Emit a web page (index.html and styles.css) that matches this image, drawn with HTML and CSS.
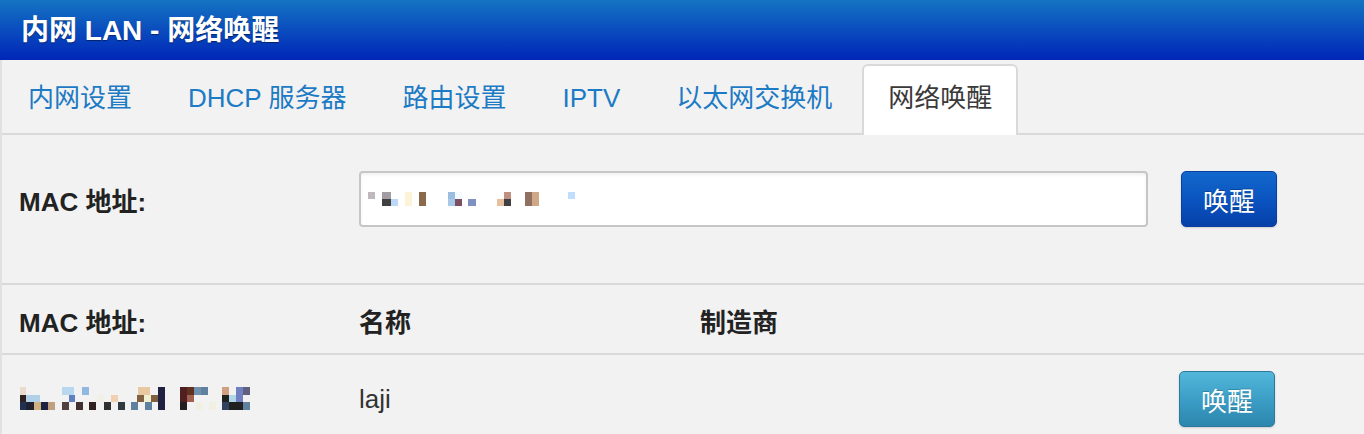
FILE: index.html
```html
<!DOCTYPE html>
<html lang="zh-CN">
<head>
<meta charset="utf-8">
<title>内网 LAN - 网络唤醒</title>
<link rel="stylesheet" href="styles.css">
</head>
<body>
<header class="header">
  <h1 class="title">内网 LAN - 网络唤醒</h1>
</header>
<main class="main">
  <nav class="tabs">
    <a class="tab" href="#">内网设置</a>
    <a class="tab" href="#">DHCP 服务器</a>
    <a class="tab" href="#">路由设置</a>
    <a class="tab" href="#">IPTV</a>
    <a class="tab" href="#">以太网交换机</a>
    <a class="tab active" href="#">网络唤醒</a>
  </nav>

  <section class="form-row">
    <label class="label" for="mac">MAC 地址:</label>
    <div class="input-wrap">
      <input id="mac" class="input" type="text">
      <svg class="mosaic mosaic-input" width="220" height="16" viewBox="0 0 220 16" aria-hidden="true">
        <rect x="8" y="2" width="7" height="7" fill="#c0b8bc"/>
        <rect x="22" y="2" width="9" height="7" fill="#a39ca3"/>
        <rect x="22" y="9" width="9" height="7" fill="#404040"/>
        <rect x="31" y="9" width="7" height="7" fill="#bcd8f8"/>
        <rect x="45" y="2" width="7" height="14" fill="#fdf3d8"/>
        <rect x="59" y="2" width="7" height="14" fill="#8b6a4c"/>
        <rect x="88" y="2" width="7" height="7" fill="#9bbde0"/>
        <rect x="88" y="9" width="7" height="7" fill="#a8c8e8"/>
        <rect x="95" y="2" width="7" height="7" fill="#f4fafe"/>
        <rect x="95" y="9" width="7" height="7" fill="#7a5060"/>
        <rect x="108" y="9" width="8" height="7" fill="#8090c0"/>
        <rect x="137" y="9" width="7" height="7" fill="#e8c0a0"/>
        <rect x="144" y="2" width="7" height="7" fill="#c09080"/>
        <rect x="144" y="9" width="7" height="7" fill="#404040"/>
        <rect x="165" y="2" width="7" height="14" fill="#907060"/>
        <rect x="172" y="2" width="7" height="14" fill="#d0a888"/>
        <rect x="208" y="2" width="7" height="7" fill="#c0dcff"/>
      </svg>
    </div>
    <button class="btn btn-primary" type="button">唤醒</button>
  </section>

  <section class="table">
    <div class="thead">
      <div class="th">MAC 地址:</div>
      <div class="th">名称</div>
      <div class="th">制造商</div>
      <div class="th"></div>
    </div>
    <div class="tr">
      <div class="td">
        <svg class="mosaic" width="232" height="24" viewBox="0 0 232 24" aria-hidden="true">
          <rect x="1" y="0" width="6" height="8" fill="#eadccc"/>
          <rect x="43" y="0" width="12" height="8" fill="#b8d8f0"/>
          <rect x="63" y="0" width="7" height="8" fill="#90b8e0"/>
          <rect x="119" y="0" width="12" height="8" fill="#e8c8a0"/>
          <rect x="139" y="0" width="7" height="23" fill="#202040"/>
          <rect x="161" y="0" width="7" height="15" fill="#502020"/>
          <rect x="168" y="0" width="7" height="8" fill="#603020"/>
          <rect x="175" y="0" width="7" height="8" fill="#7090b0"/>
          <rect x="182" y="0" width="7" height="8" fill="#6080a0"/>
          <rect x="203" y="0" width="7" height="8" fill="#d0a080"/>
          <rect x="217" y="0" width="7" height="15" fill="#7080c0"/>
          <rect x="224" y="0" width="7" height="8" fill="#606080"/>

          <rect x="1" y="8" width="6" height="7" fill="#302020"/>
          <rect x="7" y="8" width="14" height="7" fill="#b0d0e8"/>
          <rect x="50" y="8" width="6" height="7" fill="#6080c0"/>
          <rect x="78" y="8" width="7" height="7" fill="#f0f0e8"/>
          <rect x="92" y="8" width="7" height="7" fill="#f0d0b0"/>
          <rect x="118" y="8" width="7" height="7" fill="#806040"/>
          <rect x="125" y="8" width="7" height="7" fill="#f0f0d0"/>
          <rect x="132" y="8" width="7" height="7" fill="#806040"/>
          <rect x="168" y="8" width="7" height="7" fill="#a06050"/>
          <rect x="203" y="8" width="7" height="7" fill="#202020"/>
          <rect x="210" y="8" width="7" height="7" fill="#b0d8e8"/>

          <rect x="1" y="15" width="6" height="8" fill="#203050"/>
          <rect x="7" y="15" width="8" height="8" fill="#202030"/>
          <rect x="15" y="15" width="7" height="8" fill="#d0b080"/>
          <rect x="22" y="15" width="7" height="8" fill="#202040"/>
          <rect x="29" y="15" width="7" height="8" fill="#c0a080"/>
          <rect x="43" y="15" width="7" height="8" fill="#504040"/>
          <rect x="57" y="15" width="7" height="8" fill="#403030"/>
          <rect x="70" y="15" width="7" height="8" fill="#302020"/>
          <rect x="85" y="15" width="7" height="8" fill="#303030"/>
          <rect x="99" y="15" width="7" height="8" fill="#303840"/>
          <rect x="112" y="15" width="7" height="8" fill="#6080a0"/>
          <rect x="126" y="15" width="7" height="8" fill="#6080a0"/>
          <rect x="161" y="15" width="7" height="8" fill="#202020"/>
          <rect x="177" y="15" width="6" height="8" fill="#f0f0e0"/>
          <rect x="190" y="15" width="7" height="8" fill="#f0f0e0"/>
          <rect x="203" y="15" width="7" height="8" fill="#304060"/>
          <rect x="210" y="15" width="14" height="8" fill="#202020"/>
          <rect x="224" y="15" width="7" height="8" fill="#6080a0"/>
        </svg>
      </div>
      <div class="td">laji</div>
      <div class="td"></div>
      <div class="td td-action"><button class="btn btn-info" type="button">唤醒</button></div>
    </div>
  </section>
</main>
</body>
</html>
```

FILE: styles.css
```css
html, body {
  margin: 0;
  padding: 0;
}

body {
  background: #f2f2f2;
  font-family: "Liberation Sans", "Noto Sans CJK SC", Arial, sans-serif;
  font-size: 26px;
  color: #333;
  overflow: hidden;
}

.header {
  height: 60px;
  display: flex;
  align-items: center;
  padding-left: 21px;
  background: linear-gradient(to bottom, #1474c2 0%, #0a4cbe 50%, #0026b8 100%);
}

.title {
  margin: 0;
  font-size: 28px;
  font-weight: bold;
  color: #fff;
  text-shadow: 0 1px 1px rgba(0, 0, 0, 0.45);
  letter-spacing: 0;
  padding-bottom: 4px;
}

.main {
  border-left: 2px solid #e1e1e1;
  min-height: 374px;
}

.tabs {
  display: flex;
  gap: 4px;
  padding-top: 4px;
  border-bottom: 2px solid #d9d9d9;
}

.tab {
  display: block;
  padding: 0 24px 2px;
  line-height: 65px;
  border: 2px solid transparent;
  border-bottom: none;
  border-radius: 6px 6px 0 0;
  color: #1d7ac4;
  text-decoration: none;
  white-space: nowrap;
}

.tab.active {
  background: #fff;
  border-color: #d9d9d9;
  color: #3a3a3a;
  padding-bottom: 4px;
  margin-bottom: -2px;
}

.form-row {
  display: grid;
  grid-template-columns: 340px 789px 96px;
  column-gap: 0;
  align-items: center;
  padding: 36px 0 56px 17px;
  border-bottom: 2px solid #d9d9d9;
}

.label {
  font-weight: bold;
  color: #222;
}

.input-wrap {
  position: relative;
  height: 56px;
}

.input {
  box-sizing: border-box;
  width: 100%;
  height: 56px;
  margin: 0;
  border: 2px solid #c6c6c6;
  border-radius: 4px;
  background: #fff;
  box-shadow: inset 0 2px 3px rgba(0, 0, 0, 0.06);
  font: inherit;
  padding: 0 10px;
}

.mosaic {
  display: block;
}

.mosaic-input {
  position: absolute;
  left: 1px;
  top: 19px;
}

.btn {
  box-sizing: border-box;
  width: 96px;
  height: 56px;
  border-radius: 5px;
  font-family: "Liberation Sans", "Noto Sans CJK SC", sans-serif;
  font-size: 26px;
  color: #fff;
  cursor: pointer;
  padding: 0;
}

.btn-primary {
  margin-left: 33px;
  border: 1px solid #0a3f9e;
  background: linear-gradient(to bottom, #1268cc 0%, #0a52bf 55%, #0640a8 100%);
  text-shadow: 0 -1px 0 rgba(0, 0, 0, 0.25);
  box-shadow: 0 1px 2px rgba(0, 0, 0, 0.15);
}

.btn-info {
  border: 1px solid #2b7a9c;
  background: linear-gradient(to bottom, #52b7da 0%, #3a9cc4 55%, #2c86ad 100%);
  text-shadow: 0 -1px 0 rgba(0, 0, 0, 0.2);
  box-shadow: 0 1px 2px rgba(0, 0, 0, 0.15);
}

.thead,
.tr {
  display: grid;
  grid-template-columns: 340px 341px 479px 96px;
  padding-left: 17px;
  align-items: center;
}

.thead {
  height: 68px;
  border-bottom: 2px solid #d9d9d9;
}

.th {
  font-weight: bold;
  color: #222;
  padding-top: 2px;
}

.tr {
  padding-top: 16px;
  padding-bottom: 16px;
}

.td {
  color: #333;
}

.td-action {
  display: flex;
}
```
